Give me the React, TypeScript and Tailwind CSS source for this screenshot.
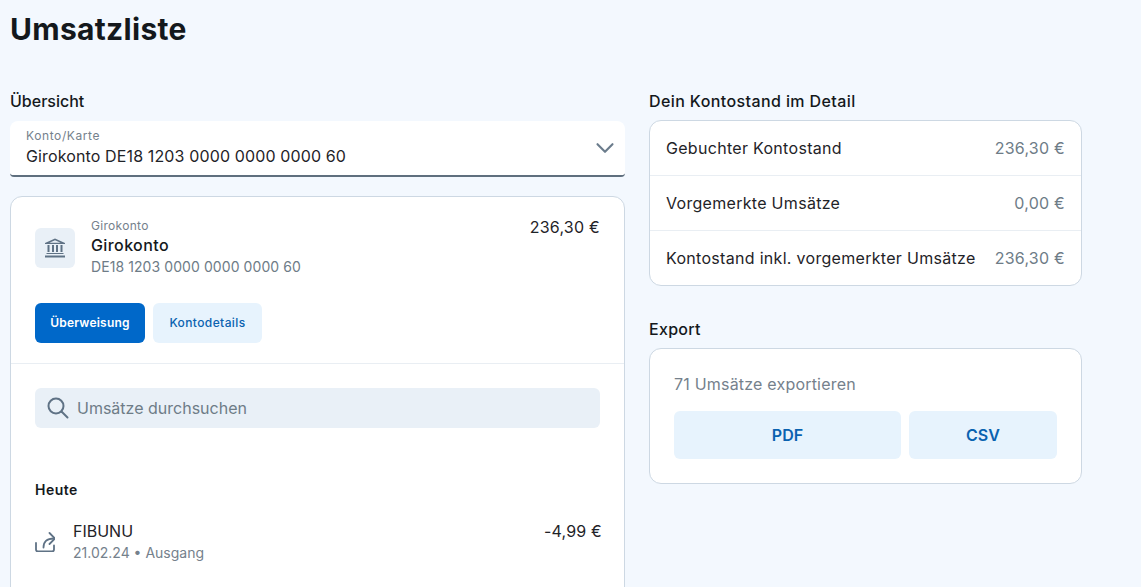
import { ChevronDown } from "lucide-react";

function BalanceRow({ label, value, last = false }: { label: string; value: string; last?: boolean }) {
  return (
    <div className={`flex items-center justify-between pr-4 pl-4 ${last ? "h-[54px]" : "h-[55px] border-b border-[#e9eef3]"}`}>
      <span className="text-[16px] tracking-[0.3px] text-[#1f2328]">{label}</span>
      <span className="text-[16px] tracking-[0.25px] text-[#6e7c87]">{value}</span>
    </div>
  );
}

function BankIcon() {
  return (
    <svg viewBox="0 0 20 20" className="h-5 w-5 text-[#5f7285]" fill="currentColor">
      <path d="M10 .5 20 5v1H0V5z M10 2.2 4.4 4.8h11.2z" fillRule="evenodd" />
      <rect x="2.5" y="7" width="2" height="7" />
      <rect x="7" y="7" width="2" height="7" />
      <rect x="11" y="7" width="2" height="7" />
      <rect x="15.5" y="7" width="2" height="7" />
      <rect x="1.5" y="15" width="17" height="1" />
      <rect x="0" y="17.5" width="20" height="2" />
    </svg>
  );
}

function OutgoingIcon() {
  return (
    <svg viewBox="0 0 20 20" className="h-5 w-5 shrink-0 text-[#5f7285]" fill="none" stroke="currentColor" strokeWidth="1.8" strokeLinecap="round" strokeLinejoin="round">
      <path d="M1 11v6.5a2 2 0 0 0 2 2h14a2 2 0 0 0 2-2v-4" />
      <path d="M8.5 15.5c0-5.5 3-9 10.5-9" />
      <path d="M14.5 1l5.5 5.5-5.5 5.5" />
    </svg>
  );
}

function SearchIcon() {
  return (
    <svg viewBox="0 0 22 22" className="h-[22px] w-[22px] shrink-0 text-[#5f7285]" fill="none" stroke="currentColor" strokeWidth="2" strokeLinecap="round">
      <circle cx="9" cy="9" r="7.5" />
      <path d="M14.5 14.5l6 6" />
    </svg>
  );
}

export default function App() {
  return (
    <div className="h-[587px] overflow-hidden bg-[#f3f8fe] pl-[10px] font-['Inter',sans-serif] text-[#14181c]">
      <h1 className="h-[90px] pt-[11px] text-[30px] leading-[36px] font-bold tracking-[0.3px]">Umsatzliste</h1>
      <div className="flex gap-6">
        <div className="w-[615px] shrink-0">
          <h2 className="h-[31px] pt-[1px] text-[16px] leading-[20px] font-medium">Übersicht</h2>
          <div className="flex h-[56px] items-center justify-between rounded-t-lg rounded-b-[4px] border-b-2 border-[#5f6f7e] bg-white pr-[5px] pl-4">
            <div>
              <div className="text-[12px] leading-[14px] tracking-[0.6px] text-[#75818c]">Konto/Karte</div>
              <div className="mt-[2px] text-[16px] leading-[22px] tracking-[0.13px] text-[#1f2328]">Girokonto DE18 1203 0000 0000 0000 60</div>
            </div>
            <ChevronDown className="h-[30px] w-[30px] text-[#6b7c8c]" strokeWidth={1.7} />
          </div>
          <div className="mt-[19px] h-[500px] rounded-t-xl border border-[#cdd8e3] bg-white">
            <div className="border-b border-[#e9eef3] pt-[20px] pr-6 pb-5 pl-6">
              <div className="flex items-start justify-between">
                <div className="flex items-center gap-4">
                  <div className="mt-[1px] flex h-10 w-10 items-center justify-center rounded-md bg-[#e9f0f7]">
                    <BankIcon />
                  </div>
                  <div className="mt-[1px]">
                    <div className="text-[12px] leading-[16px] tracking-[0.3px] text-[#75818c]">Girokonto</div>
                    <div className="text-[16px] leading-[22px] font-medium tracking-[0.4px]">Girokonto</div>
                    <div className="text-[14px] leading-[22px] tracking-[0.08px] text-[#6e7c87]">DE18 1203 0000 0000 0000 60</div>
                  </div>
                </div>
                <span className="text-[16px] leading-[20px] tracking-[0.25px] text-[#1f2328]">236,30 €</span>
              </div>
              <div className="mt-[25px] flex gap-2">
                <button className="h-10 w-[110px] rounded-md bg-[#0068c9] text-[12px] font-semibold tracking-[0.2px] text-white">Überweisung</button>
                <button className="h-10 w-[109px] rounded-md bg-[#e7f3fd] text-[12px] font-medium tracking-[0.4px] text-[#0a62b0]">Kontodetails</button>
              </div>
            </div>
            <div className="pt-6 pr-6 pl-6">
              <div className="flex h-10 items-center gap-2 rounded-md bg-[#e9f0f7] pl-3">
                <SearchIcon />
                <span className="text-[16px] text-[#6e7c87]">Umsätze durchsuchen</span>
              </div>
              <div className="mt-[53px] text-[14px] leading-[18px] font-semibold tracking-[0.5px]">Heute</div>
              <div className="mt-[21px] flex items-start justify-between">
                <div className="flex items-center gap-[18px]">
                  <OutgoingIcon />
                  <div>
                    <div className="text-[16px] leading-[22px] text-[#1f2328]">FIBUNU</div>
                    <div className="text-[14px] leading-[22px] text-[#75818c]">21.02.24 • Ausgang</div>
                  </div>
                </div>
                <span className="-mr-[2px] text-[16px] leading-[22px] tracking-[0.2px] text-[#1f2328]">-4,99 €</span>
              </div>
            </div>
          </div>
        </div>
        <div className="w-[433px] shrink-0">
          <h2 className="h-[30px] pt-[1px] text-[16px] leading-[20px] font-medium tracking-[0.4px]">Dein Kontostand im Detail</h2>
          <div className="rounded-xl border border-[#cdd8e3] bg-white">
            <BalanceRow label="Gebuchter Kontostand" value="236,30 €" />
            <BalanceRow label="Vorgemerkte Umsätze" value="0,00 €" />
            <BalanceRow label="Kontostand inkl. vorgemerkter Umsätze" value="236,30 €" last />
          </div>
          <h2 className="mt-[33px] h-[29px] text-[16px] leading-[20px] font-medium tracking-[0.3px]">Export</h2>
          <div className="h-[136px] rounded-xl border border-[#cdd8e3] bg-white pt-[24px] pr-6 pl-6">
            <div className="text-[16px] leading-[22px] tracking-[0.2px] text-[#75818c]">71 Umsätze exportieren</div>
            <div className="mt-4 flex gap-2">
              <button className="h-12 w-[227px] rounded-md bg-[#e7f3fd] text-[16px] font-semibold text-[#0a62b0]">PDF</button>
              <button className="h-12 w-[148px] rounded-md bg-[#e7f3fd] text-[16px] font-semibold text-[#0a62b0]">CSV</button>
            </div>
          </div>
        </div>
      </div>
    </div>
  );
}
